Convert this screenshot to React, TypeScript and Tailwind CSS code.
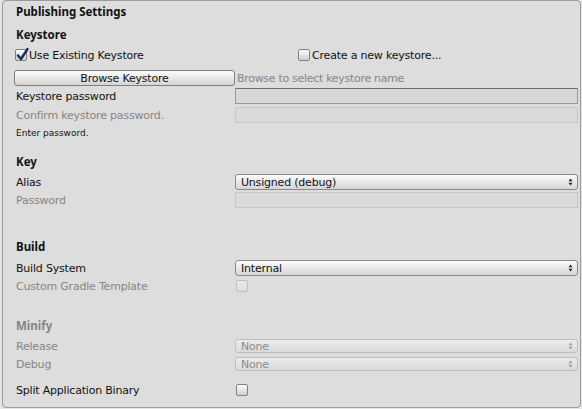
import React from "react";

const font = { fontFamily: '"DejaVu Sans", Verdana, sans-serif' };
const boldFont = { fontFamily: '"Noto Sans", "DejaVu Sans", sans-serif' };

function Check({ checked, disabled }: { checked?: boolean; disabled?: boolean }) {
  return (
    <div
      className={
        "relative w-[12px] h-[12px] rounded-[2px] border shrink-0 " +
        (disabled
          ? "border-[#bdbdbd] bg-gradient-to-b from-[#ececec] to-[#dcdcdc]"
          : "border-[#828282] bg-gradient-to-b from-[#fdfdfd] to-[#cfcfcf]")
      }
    >
      {checked && (
        <svg className="absolute left-[0px] top-[-3px]" width="13" height="14" viewBox="0 0 13 14">
          <path d="M2 8.5 L5 12 L11.5 2" fill="none" stroke="#1a2e5a" strokeWidth="2.4" strokeLinecap="round" strokeLinejoin="round" />
        </svg>
      )}
    </div>
  );
}

function Arrows({ disabled }: { disabled?: boolean }) {
  const c = disabled ? "#9a9a9a" : "#222";
  return (
    <svg width="5" height="8" viewBox="0 0 5 8">
      <path d="M0.5 3.2 L2.5 0.5 L4.5 3.2 Z" fill={c} />
      <path d="M0.5 4.8 L2.5 7.5 L4.5 4.8 Z" fill={c} />
    </svg>
  );
}

function Dropdown({ value, disabled, h = 16 }: { value: string; disabled?: boolean; h?: number }) {
  return (
    <div
      className={
        "flex items-center justify-between w-[343px] rounded-[3px] border pl-[5px] pr-[4px] text-[11px] tracking-[-0.2px] " +
        (disabled
          ? "border-[#bebebe] bg-gradient-to-b from-[#ececec] to-[#dadada] text-[#8a8a8a]"
          : "border-[#8a8a8a] bg-gradient-to-b from-[#fbfbfb] to-[#d6d6d6] text-[#111]")
      }
      style={{ height: h }}
    >
      <span className="leading-none">{value}</span>
      <Arrows disabled={disabled} />
    </div>
  );
}

function Field({ disabled }: { disabled?: boolean }) {
  return (
    <div
      className={
        "w-[343px] h-[16px] border " +
        (disabled
          ? "border-[#c6c6c6] bg-[#dadada]"
          : "border-[#9a9a9a] border-t-[#6e6e6e] bg-[#d8d8d8]")
      }
    />
  );
}

function Row({ label, gray, children, mt, h = 16 }: { label: string; gray?: boolean; children?: React.ReactNode; mt: string; h?: number }) {
  return (
    <div className={"flex items-center " + mt} style={{ height: h }}>
      <div className={"w-[219px] text-[11px] tracking-[-0.2px] leading-none " + (gray ? "text-[#858585]" : "text-[#111]")}>{label}</div>
      {children}
    </div>
  );
}

function Header({ children, mt, gray }: { children: React.ReactNode; mt: string; gray?: boolean }) {
  return (
    <div
      className={"h-[16px] flex items-center text-[11.5px] font-bold leading-none " + mt + (gray ? " text-[#858585]" : " text-[#111]")}
      style={boldFont}
    >
      {children}
    </div>
  );
}

export default function App() {
  return (
    <div className="w-[582px] h-[409px] bg-[#e6e6e6]" style={font}>
      <div className="ml-[2px] w-[579px] h-[408px] bg-[#dddddd] border border-[#9b9b9b] rounded-[4px] pl-[13px] pt-[3px]">
        <Header mt="">Publishing Settings</Header>

        <Header mt="mt-[7px]">Keystore</Header>

        <div className="mt-[4px] h-[16px] flex items-center text-[11px] tracking-[-0.2px] text-[#111] leading-none">
          <div className="w-[283px] flex items-center ml-[-1px]">
            <Check checked />
            <span className="ml-[2px]">Use Existing Keystore</span>
          </div>
          <div className="flex items-center">
            <Check />
            <span className="ml-[2px]">Create a new keystore...</span>
          </div>
        </div>

        <div className="mt-[7px] h-[16px] flex items-center">
          <div className="ml-[-2px] w-[221px] h-[16px] rounded-[3px] border border-[#7f7f7f] bg-gradient-to-b from-[#fdfdfd] to-[#d4d4d4] flex items-center justify-center text-[11px] tracking-[-0.2px] text-[#111] leading-none">
            Browse Keystore
          </div>
          <span className="ml-[2px] text-[11px] tracking-[-0.3px] text-[#858585] leading-none">Browse to select keystore name</span>
        </div>

        <Row label="Keystore password" mt="mt-[2px]">
          <Field />
        </Row>
        <Row label="Confirm keystore password." gray mt="mt-[3px]">
          <Field disabled />
        </Row>
        <div className="mt-[3px] h-[14px] flex items-center text-[9px] text-[#111] leading-none">Enter password.</div>

        <Header mt="mt-[14px]">Key</Header>
        <Row label="Alias" mt="mt-[4px]">
          <Dropdown value="Unsigned (debug)" />
        </Row>
        <Row label="Password" gray mt="mt-[2px]">
          <Field disabled />
        </Row>

        <Header mt="mt-[31px]">Build</Header>
        <Row label="Build System" mt="mt-[5px]">
          <Dropdown value="Internal" />
        </Row>
        <Row label="Custom Gradle Template" gray mt="mt-[2px]">
          <div className="ml-[1px]">
            <Check disabled />
          </div>
        </Row>

        <Header mt="mt-[24px]" gray>Minify</Header>
        <Row label="Release" gray mt="mt-[4px]">
          <Dropdown value="None" disabled h={14} />
        </Row>
        <Row label="Debug" gray mt="mt-[2px]">
          <Dropdown value="None" disabled h={14} />
        </Row>
        <Row label="Split Application Binary" mt="mt-[10px]">
          <div className="ml-[1px]">
            <Check />
          </div>
        </Row>
      </div>
    </div>
  );
}
